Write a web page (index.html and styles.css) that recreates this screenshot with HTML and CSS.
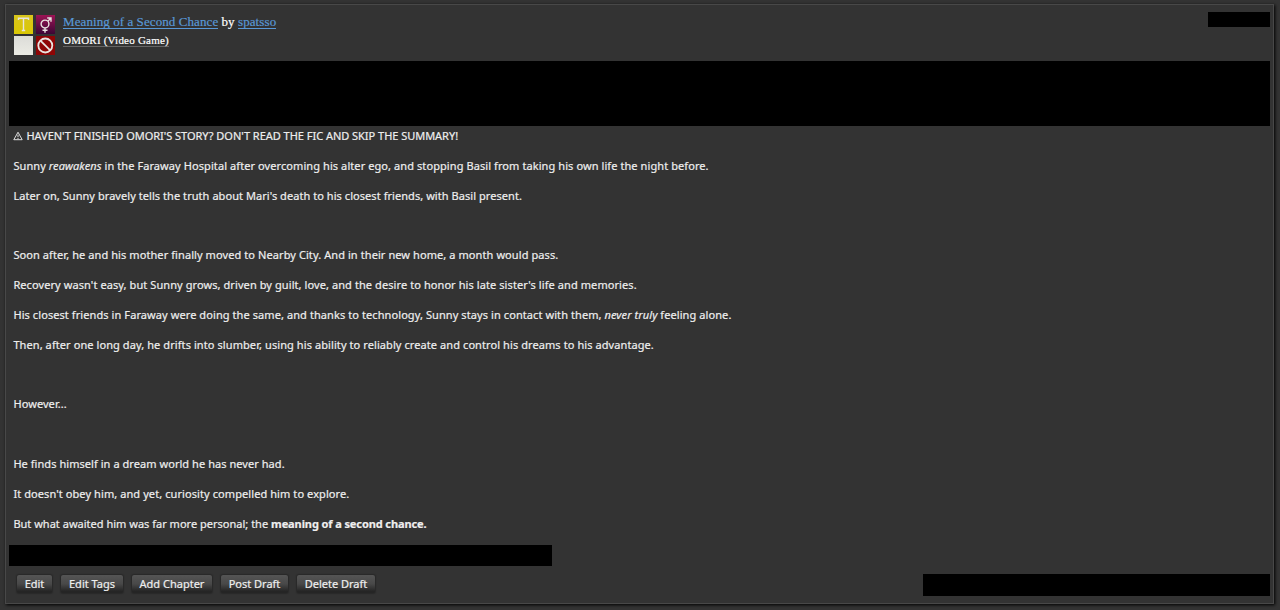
FILE: index.html
```html
<!DOCTYPE html>
<html lang="en">

<head>
    <meta charset="UTF-8">
    <meta name="viewport" content="width=device-width, initial-scale=1.0">
    <title>Meaning of a Second Chance</title>
    <link rel="stylesheet" href="styles.css">
</head>

<body>
    <article class="work">
        <header class="work-header">
            <!-- Rating, category, warning and status -->
            <div class="required-tags">
                <svg class="tag rating" viewBox="0 0 19 19">
                    <path d="M4.5 5V3.2H14.5V5M9.5 3.2V15.5M7.8 15.5H11.2" />
                </svg>
                <svg class="tag category" viewBox="0 0 19 19">
                    <circle cx="9" cy="9" r="3.9" />
                    <path d="M11.8 6.2L15 3M11.2 3H15V6.8M9 12.9V17.8M6.5 15.3H11.5" />
                </svg>
                <span class="tag warning"></span>
                <svg class="tag status" viewBox="0 0 19 19">
                    <circle cx="9.3" cy="9.5" r="7" />
                    <path d="M4.4 4.6L14.2 14.4" />
                </svg>
            </div>
            <div class="heading">
                <h4 class="title"><a href="#" class="work-link">Meaning of a Second Chance</a> <span class="by">by</span> <a href="#" class="author-link">spatsso</a></h4>
                <h5 class="fandom"><a href="#">OMORI (Video Game)</a></h5>
            </div>
            <div class="bar date-bar"></div>
        </header>

        <div class="bar tags-bar"></div>

        <div class="summary">
            <p class="notice"><svg class="alert" viewBox="0 0 10 10"><path d="M5 1.2L9.2 8.7H0.8Z" /><path d="M5 3.7V6.2M5 7V8" /></svg>HAVEN'T FINISHED OMORI'S STORY? DON'T READ THE FIC AND SKIP THE SUMMARY!</p>
            <p>Sunny <em>reawakens</em> in the Faraway Hospital after overcoming his alter ego, and stopping Basil from taking his own life the night before.</p>
            <p class="tight">Later on, Sunny bravely tells the truth about Mari's death to his closest friends, with Basil present.</p>
            <p>&nbsp;</p>
            <p>Soon after, he and his mother finally moved to Nearby City. And in their new home, a month would pass.</p>
            <p>Recovery wasn't easy, but Sunny grows, driven by guilt, love, and the desire to honor his late sister's life and memories.</p>
            <p>His closest friends in Faraway were doing the same, and thanks to technology, Sunny stays in contact with them, <em>never truly</em> feeling alone.</p>
            <p>Then, after one long day, he drifts into slumber, using his ability to reliably create and control his dreams to his advantage.</p>
            <p>&nbsp;</p>
            <p>However...</p>
            <p>&nbsp;</p>
            <p class="tight">He finds himself in a dream world he has never had.</p>
            <p>It doesn't obey him, and yet, curiosity compelled him to explore.</p>
            <p class="closing">But what awaited him was far more personal; the <strong>meaning of a second chance.</strong></p>
        </div>

        <div class="bar series-bar"></div>

        <footer class="work-footer">
            <div class="actions">
                <a href="#" class="btn edit">Edit</a>
                <a href="#" class="btn edit-tags">Edit Tags</a>
                <a href="#" class="btn add-chapter">Add Chapter</a>
                <a href="#" class="btn post">Post Draft</a>
                <a href="#" class="btn delete">Delete Draft</a>
            </div>
            <div class="bar stats-bar"></div>
        </footer>
    </article>
</body>

</html>
```
FILE: styles.css
```css
* {
    margin: 0;
    padding: 0;
    box-sizing: border-box;
}

body {
    height: 610px;
    padding: 4px 6px 6px 5px;
    overflow: hidden;
    background: #333;
    color: #eee;
    font-family: "Noto Sans", sans-serif;
    font-size: 11px;
    -webkit-text-stroke: 0.2px;
}

.work {
    height: 600px;
    padding: 7px 3px 0 3px;
    border: 1px solid #484848;
    box-shadow: 1px 1px 3px #000;
}

.bar {
    background: #000;
}

/* Header */
.work-header {
    display: flex;
    height: 49px;
    padding: 3px 0 0 5px;
}

.required-tags {
    display: grid;
    grid-template-columns: 19px 19px;
    grid-template-rows: 19px 19px;
    gap: 2px 3px;
    width: 41px;
}

.tag {
    width: 19px;
    height: 19px;
    fill: none;
    stroke: #e8e4e0;
    stroke-width: 1.4;
}

.rating {
    background: linear-gradient(#d8c51c, #dac704);
}

.category {
    background: linear-gradient(#9c1455, #3c0635);
}

.warning {
    background: linear-gradient(#dcdcd8, #ebebe4);
}

.status {
    background: #8e0505;
    stroke-width: 1.8;
}

.heading {
    margin: -1px 0 0 8px;
    font-family: "Liberation Serif", serif;
}

.heading h4,
.heading h5 {
    font-weight: normal;
    white-space: nowrap;
}

.title {
    height: 19px;
    font-size: 13px;
    line-height: 15px;
    letter-spacing: 0.1px;
    word-spacing: -0.1px;
}

.title a {
    display: inline-block;
    height: 15px;
    border-bottom: 1px solid #5998d6;
    color: #5998d6;
    text-decoration: none;
}

.by {
    color: #fff;
}

.fandom {
    font-size: 11px;
    line-height: 14px;
    letter-spacing: 0.22px;
}

.fandom a {
    display: inline-block;
    height: 14px;
    border-bottom: 1px solid #666;
    color: #fff;
    text-decoration: none;
}

.date-bar {
    width: 62px;
    height: 15px;
    margin: -3px 0 0 auto;
}

.tags-bar {
    height: 65px;
}

/* Summary */
.summary {
    display: grid;
    grid-template-rows: repeat(14, 29.82px);
    height: 423px;
    margin-top: -4px;
    padding-left: 4.4px;
    line-height: 28.6px;
    letter-spacing: 0.085px;
    white-space: nowrap;
}

.notice {
    letter-spacing: -0.025px;
}

.summary .tight {
    letter-spacing: 0.055px;
}

.summary .closing {
    letter-spacing: 0.01px;
}

.summary strong {
    letter-spacing: -0.1px;
}

.alert {
    width: 10px;
    height: 10px;
    margin-right: 3px;
    vertical-align: -1px;
    fill: none;
    stroke: #ddd;
}

.series-bar {
    width: 543px;
    height: 21px;
}

/* Footer */
.work-footer {
    display: flex;
    justify-content: space-between;
    margin-top: 8px;
}

.actions {
    display: flex;
    gap: 7px;
    padding-left: 7px;
}

.btn {
    height: 20px;
    border: 1px solid #292929;
    border-radius: 3px;
    background: linear-gradient(#555, #484848 50%, #252525 90%);
    box-shadow: 0 0 1px #222;
    color: #eee;
    line-height: 18px;
    text-align: center;
    text-decoration: none;
}

.edit {
    width: 37px;
}

.edit-tags {
    width: 64px;
}

.add-chapter {
    width: 82px;
}

.post {
    width: 69px;
}

.delete {
    width: 80px;
}

.stats-bar {
    width: 347px;
    height: 22px;
}
```
